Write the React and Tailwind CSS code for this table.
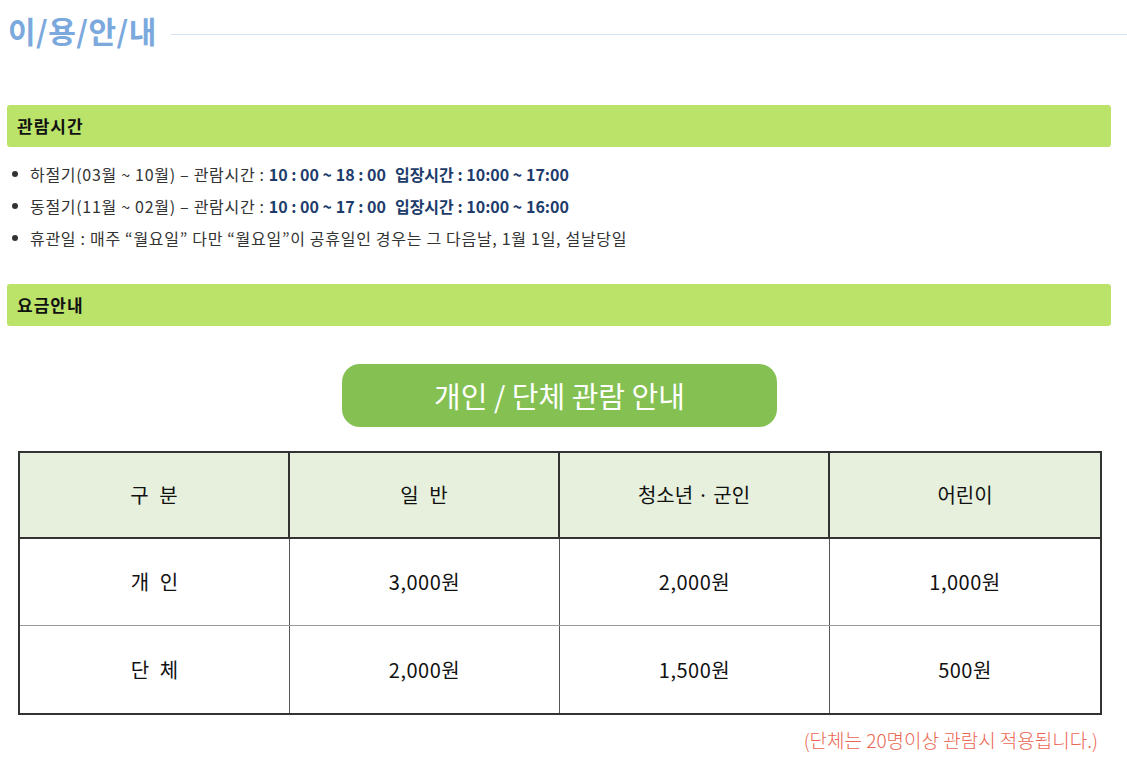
const font = { fontFamily: '"Noto Sans CJK KR", "Noto Sans", sans-serif' };

const hours = [
  { season: "하절기(03월 ~ 10월)", open: "10 : 00 ~ 18 : 00", enter: "10:00 ~ 17:00" },
  { season: "동절기(11월 ~ 02월)", open: "10 : 00 ~ 17 : 00", enter: "10:00 ~ 16:00" },
];

const rows = [
  { label: "개 인", prices: ["3,000원", "2,000원", "1,000원"] },
  { label: "단 체", prices: ["2,000원", "1,500원", "500원"] },
];

const SectionBar = ({ children }) => (
  <div className="w-[1104px] h-[42px] flex items-center px-[10px] rounded-[3px] bg-[#bbe36a]">
    <span className="text-[17px] font-bold text-[#111] tracking-[1px]">{children}</span>
  </div>
);

export default function App() {
  return (
    <div className="w-[1127px] bg-white text-[#333]" style={font}>
      <div className="flex items-end gap-[14px] pl-[8px] h-[50px] pt-[4px]">
        <h1 className="text-[30px] leading-[40px] font-bold text-[#7ba9dd] tracking-[0.5px]">이/용/안/내</h1>
        <div className="flex-1 h-px bg-[#d3e3f4] mb-[15px]" />
      </div>

      <div className="px-[7px] pt-[55px]">
        <SectionBar>관람시간</SectionBar>
        <ul className="pt-[11px] pl-[5px]">
          {hours.map((h) => (
            <li key={h.season} className="flex items-center h-[32px] text-[16px] tracking-[0.7px] text-[#333]">
              <span className="w-[6px] h-[6px] rounded-full bg-[#333] mr-[12px]" />
              <span>{h.season} – 관람시간 : </span>
              <span className="font-semibold text-[#1d3c6b] ml-[4px] tracking-normal">{h.open}</span>
              <span className="font-semibold text-[#1d3c6b] ml-[9px] tracking-normal">입장시간 : {h.enter}</span>
            </li>
          ))}
          <li className="flex items-center h-[32px] text-[16px] tracking-[0.7px] text-[#333]">
            <span className="w-[6px] h-[6px] rounded-full bg-[#333] mr-[12px]" />
            <span>휴관일 : 매주 “월요일” 다만 “월요일”이 공휴일인 경우는 그 다음날, 1월 1일, 설날당일</span>
          </li>
        </ul>

        <div className="pt-[30px]">
          <SectionBar>요금안내</SectionBar>
        </div>

        <div className="flex justify-center pt-[38px] pr-[8px]">
          <div className="w-[435px] h-[63px] rounded-[18px] bg-[#84c152] flex items-center justify-center">
            <span className="text-[29px] text-white">개인 / 단체 관람 안내</span>
          </div>
        </div>

        <div className="pt-[24px] pl-[11px]">
          <div className="w-[1084px] border-2 border-[#333]">
            <div className="grid grid-cols-4 h-[86px] bg-[#e6f0dc] border-b-2 border-[#333]">
              {["구 분", "일 반", "청소년 · 군인", "어린이"].map((t, i) => (
                <div
                  key={t}
                  className={`flex items-center justify-center text-[20px] text-[#111] ${i < 2 ? "[word-spacing:6px]" : ""} ${i < 3 ? "border-r-2 border-[#333]" : ""}`}
                >
                  {t}
                </div>
              ))}
            </div>
            {rows.map((r, ri) => (
              <div
                key={r.label}
                className={`grid grid-cols-4 h-[87px] ${ri === 0 ? "border-b border-[#9a9a9a]" : ""}`}
              >
                <div className="flex items-center justify-center text-[20px] text-[#111] [word-spacing:6px] border-r border-[#555]">
                  {r.label}
                </div>
                {r.prices.map((p, pi) => (
                  <div
                    key={pi}
                    className={`flex items-center justify-center text-[20px] text-[#111] tracking-[0.5px] ${pi < 2 ? "border-r border-[#555]" : ""}`}
                  >
                    {p}
                  </div>
                ))}
              </div>
            ))}
          </div>
        </div>

        <div className="flex justify-end w-[1091px] pt-[11px]">
          <span className="text-[19px] font-light text-[#ea6652]">(단체는 20명이상 관람시 적용됩니다.)</span>
        </div>
      </div>
    </div>
  );
}
